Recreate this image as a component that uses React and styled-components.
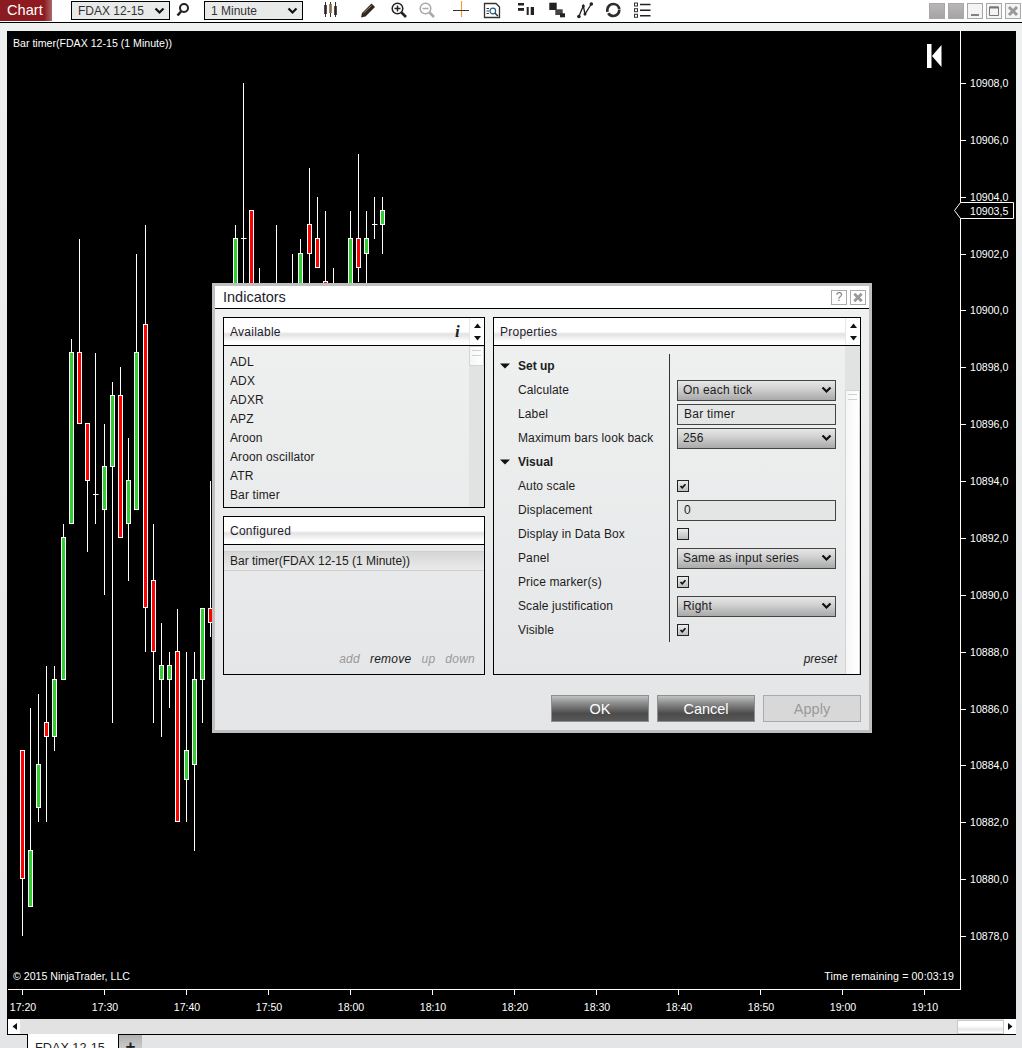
import React from "react";
import styled, { createGlobalStyle } from "styled-components";

const GlobalStyle = createGlobalStyle`
  html, body {
    margin: 0;
    padding: 0;
    background: #e9eaea;
  }
  * {
    box-sizing: border-box;
  }
`;

const Page = styled.div`
  position: relative;
  width: 1022px;
  height: 1048px;
  overflow: hidden;
  display: flex;
  flex-direction: column;
  font-family: "Liberation Sans", Arial, sans-serif;
  background: linear-gradient(#eff0f0, #e4e5e6);
`;

/* top toolbar */
const Toolbar = styled.div`
  display: flex;
  align-items: center;
  height: 23px;
  padding-bottom: 1px;
  background: #fff;
  border-bottom: 1px solid #000;
`;
const ChartTab = styled.div`
  align-self: stretch;
  width: 52px;
  padding-left: 7px;
  margin-right: 19px;
  color: #fff;
  font-size: 14.6px;
  line-height: 21px;
  background: linear-gradient(90deg, #8a1b20 0%, #8f1a20 85%, #a86a6c 100%);
`;
const ToolSelect = styled.div`
  display: flex;
  align-items: center;
  justify-content: space-between;
  width: 99px;
  height: 19px;
  padding: 0 4px 0 6px;
  font-size: 12px;
  color: #333;
  background: #e8e9e9;
  border: 1px solid #000;
`;
const SearchIcon = styled.svg`
  width: 14px;
  height: 19px;
  margin: 0 14px 0 6px;
`;
const ToolIcon = styled.svg`
  flex: none;
  width: 18px;
  height: 19px;
  margin-left: ${(p) => p.$gap}px;
`;
const WindowButtons = styled.div`
  display: flex;
  gap: 3px;
  margin-left: auto;
  margin-top: 1px;
  padding-right: 1px;
`;
const WinButton = styled.div`
  width: 16px;
  height: 16px;
  border: 1px solid #a8a8a8;
  background: ${(p) => (p.$filled ? "linear-gradient(#b8b6b6, #a6a4a4)" : "#f4f4f4")};
  svg {
    display: block;
    width: 14px;
    height: 14px;
  }
`;

/* chart */
const Workspace = styled.div`
  padding: 8px 6px 0 7px;
`;
const ChartFrame = styled.div`
  position: relative;
  display: flex;
  flex-direction: column;
  height: 1004px;
  background: #000;
  border-bottom: 1px solid #000;
`;
const ChartSvg = styled.svg`
  display: block;
  width: 1009px;
  height: 988px;
`;
const AxisLabel = styled.text`
  fill: #fff;
  font-family: "Liberation Sans", Arial, sans-serif;
  font-size: 10.6px;
`;
const ChartNote = styled.div`
  position: absolute;
  color: #fff;
  font-size: 10.6px;
  line-height: 12px;
  letter-spacing: ${(p) => p.$spacing || 0}px;
  ${(p) => p.$top !== undefined && `top: ${p.$top}px;`}
  ${(p) => p.$left !== undefined && `left: ${p.$left}px;`}
  ${(p) => p.$right !== undefined && `right: ${p.$right}px;`}
`;
const HScroll = styled.div`
  display: flex;
  align-items: center;
  height: 15px;
  background: #e2e2e2;
  border-left: 1px solid #000;
`;
const ScrollEnd = styled.div`
  display: flex;
  align-items: center;
  justify-content: center;
  width: ${(p) => p.$width}px;
  height: 15px;
  background: #fff;
`;
const HThumb = styled.div`
  width: 47px;
  height: 14px;
  margin-left: auto;
  background: linear-gradient(#fff 40%, #e6e6e6 70%, #fff);
  border: 1px solid #c8c8c8;
`;
const TabRow = styled.div`
  display: flex;
  padding-left: 27px;
`;
const SheetTab = styled.div`
  position: relative;
  width: 92px;
  height: 20px;
  margin-top: -1px;
  padding: 6px 0 0 7px;
  color: #222;
  font-size: 12.7px;
  line-height: 16px;
  background: #fff;
  border-left: 1px solid #000;
  border-right: 1px solid #000;
`;
const AddTab = styled.div`
  width: 23px;
  height: 20px;
  text-align: center;
  color: #222;
  font-size: 17px;
  font-weight: bold;
  line-height: 23px;
  background: linear-gradient(#b0b0b0, #d8d8d8);
`;

/* dialog */
const Dialog = styled.div`
  position: absolute;
  left: 212px;
  top: 283px;
  width: 660px;
  height: 450px;
  display: flex;
  flex-direction: column;
  border: 3px solid #c0c0c0;
  background: linear-gradient(#f0f1f1, #e4e5e6);
`;
const TitleBar = styled.div`
  display: flex;
  align-items: center;
  height: 23px;
  padding: 0 3px 0 8px;
  background: #fff;
  border-bottom: 1px solid #000;
`;
const Title = styled.div`
  flex: 1;
  color: #1c1c2c;
  font-size: 14.5px;
`;
const TitleButton = styled.div`
  width: 16px;
  height: 15px;
  margin-left: 3px;
  color: #777;
  font-size: 12px;
  line-height: 13px;
  text-align: center;
  border: 1px solid #aaa;
  svg {
    display: block;
    width: 14px;
    height: 13px;
  }
`;
const Body = styled.div`
  display: grid;
  grid-template-columns: 262px 368px;
  gap: 8px;
  padding: 8px 8px 0 8px;
`;
const Column = styled.div`
  display: flex;
  flex-direction: column;
  gap: 8px;
`;
const Panel = styled.div`
  position: relative;
  display: flex;
  flex-direction: column;
  height: ${(p) => p.$height}px;
  border: 1px solid #000;
`;
const PanelHeader = styled.div`
  display: flex;
  align-items: center;
  flex: none;
  height: 28px;
  padding-left: 6px;
  color: #1c1c2c;
  font-size: 12px;
  letter-spacing: 0.25px;
  background: linear-gradient(#fff 50%, #e2e2e2 60%, #fff 88%);
  border-bottom: 1px solid #000;
`;
const HeaderTitle = styled.div`
  flex: 1;
`;
const InfoMark = styled.div`
  margin-right: 9px;
  font-family: "Liberation Serif", serif;
  font-size: 17px;
  font-style: italic;
  font-weight: bold;
  color: #222;
`;
const HeaderArrows = styled.div`
  display: flex;
  flex-direction: column;
  align-items: center;
  justify-content: space-between;
  align-self: stretch;
  width: 15px;
  padding: 5px 0 4px;
  background: #fff;
  border-left: 1px solid #e8e8e8;
`;
const ListArea = styled.div`
  display: flex;
  flex: 1;
  min-height: 0;
`;
const ItemList = styled.div`
  flex: 1;
  padding-top: 7px;
`;
const Item = styled.div`
  height: 19px;
  padding-left: 6px;
  color: #1c1c1c;
  font-size: 12px;
  letter-spacing: 0.12px;
  line-height: 19px;
`;
const VScroll = styled.div`
  display: flex;
  flex: none;
  flex-direction: column;
  width: 15px;
  padding-top: ${(p) => p.$thumbTop}px;
  background: #e1e2e2;
`;
const VThumb = styled.div`
  height: ${(p) => p.$height}px;
  padding-top: 3px;
  background: linear-gradient(90deg, #f6f6f6, #fff);
  border: 1px solid #d4d4d4;
  border-bottom: ${(p) => (p.$open ? "none" : "1px solid #d4d4d4")};
  &::before {
    content: "";
    display: block;
    height: 4px;
    margin: 0 2px;
    border-top: 1px solid #d0d0d0;
    border-bottom: 1px solid #d0d0d0;
  }
`;
const ConfigBody = styled.div`
  flex: 1;
  display: flex;
  flex-direction: column;
  padding-top: 6px;
`;
const SelectedRow = styled.div`
  height: 20px;
  padding-left: 6px;
  color: #1c1c1c;
  font-size: 12px;
  line-height: 19px;
  background: linear-gradient(#d6d6d6, #eaeaea);
  border-top: 1px solid #cfcfcf;
  border-bottom: 1px solid #cfcfcf;
`;
const ActionRow = styled.div`
  display: flex;
  justify-content: flex-end;
  gap: 10px;
  margin-top: auto;
  padding: 0 9px 8px 0;
  font-size: 12px;
  font-style: italic;
  letter-spacing: 0.25px;
  line-height: 14px;
`;
const Action = styled.span`
  color: ${(p) => (p.$active ? "#1a1a1a" : "#9a9a9a")};
`;
const PropArea = styled.div`
  flex: 1;
  display: flex;
  flex-direction: column;
`;
const PropList = styled.div`
  margin-top: 6px;
`;
const PropRow = styled.div`
  display: flex;
  height: 24px;
  &:first-child {
    height: 26px;
    padding-top: 2px;
  }
  &:last-child {
    height: 25px;
    padding-bottom: 1px;
  }
`;
const PropName = styled.div`
  display: flex;
  align-items: center;
  width: 175px;
  padding-left: 24px;
  color: #1c1c1c;
  font-size: 12px;
  letter-spacing: 0.12px;
`;
const SectionName = styled(PropName)`
  position: relative;
  font-weight: bold;
  letter-spacing: 0;
  svg {
    position: absolute;
    left: 6px;
    top: 9px;
  }
`;
const PropValue = styled.div`
  display: flex;
  align-items: center;
  flex: 1;
  padding-left: 7px;
  border-left: 1px solid #333;
`;
const SelectBox = styled.div`
  display: flex;
  align-items: center;
  justify-content: space-between;
  width: 159px;
  height: 21px;
  padding: 0 3px 0 5px;
  color: #1c1c1c;
  font-size: 12px;
  letter-spacing: 0.2px;
  background: linear-gradient(#e6e6e6, #d2d2d2 40%, #a9a9a9);
  border: 1px solid #444;
`;
const TextBox = styled.div`
  display: flex;
  align-items: center;
  width: 159px;
  height: 21px;
  padding-left: 6px;
  color: #1c1c1c;
  font-size: 12px;
  letter-spacing: 0.25px;
  background: #e4e5e5;
  border: 1px solid #444;
`;
const CheckBox = styled.div`
  width: 12px;
  height: 12px;
  background: linear-gradient(#ececec, #bcbcbc);
  border: 1px solid #222;
  svg {
    display: block;
    width: 10px;
    height: 10px;
  }
`;
const PresetLink = styled.div`
  margin-top: auto;
  padding: 0 8px 8px 0;
  text-align: right;
  color: #1a1a1a;
  font-size: 12px;
  font-style: italic;
  line-height: 14px;
`;
const Footer = styled.div`
  display: flex;
  justify-content: flex-end;
  gap: 8px;
  padding: 20px 8px 0 0;
`;
const DialogButton = styled.div`
  width: 98px;
  height: 27px;
  text-align: center;
  font-size: 14.5px;
  line-height: 26px;
  color: ${(p) => (p.$disabled ? "#9a9a9a" : "#fff")};
  background: ${(p) =>
    p.$disabled
      ? "#d8d8d8"
      : "linear-gradient(#c2c2c2, #8a8a8a 30%, #4c4c4c 70%, #585858)"};
  border: 1px solid ${(p) => (p.$disabled ? "#aaa" : "#8f8f8f")};
`;

const TIMES = ["17:20", "17:30", "17:40", "17:50", "18:00", "18:10", "18:20", "18:30", "18:40", "18:50", "19:00", "19:10"];
const PRICES = [10908, 10906, 10904, 10902, 10900, 10898, 10896, 10894, 10892, 10890, 10888, 10886, 10884, 10882, 10880, 10878];
const GREEN = "#32cd32";
const RED = "#ff0000";

// x, wick top, wick bottom, body top, body bottom, colour (no colour = doji)
const CANDLES = [
  [22.5, 750, 936, 750, 879, RED],
  [30.5, 708, 907, 850, 907, GREEN],
  [38.5, 694, 822, 764, 808, GREEN],
  [46.5, 666, 822, 722, 737, RED],
  [54.5, 666, 751, 679, 737, GREEN],
  [63.5, 524, 680, 537, 680, GREEN],
  [71.5, 339, 524, 352, 524, GREEN],
  [79.5, 239, 424, 352, 424, RED],
  [87.5, 423, 552, 423, 481, RED],
  [95.5, 353, 524, 494, 494],
  [104.5, 424, 595, 466, 510, GREEN],
  [112.5, 382, 723, 395, 467, GREEN],
  [120.5, 367, 538, 395, 538, RED],
  [128.5, 438, 581, 480, 524, GREEN],
  [136.5, 254, 510, 352, 510, GREEN],
  [145.5, 225, 652, 324, 608, RED],
  [153.5, 524, 723, 580, 652, RED],
  [161.5, 623, 737, 665, 680, GREEN],
  [169.5, 652, 708, 665, 680, GREEN],
  [177.5, 609, 822, 651, 822, RED],
  [186.5, 652, 822, 750, 780, GREEN],
  [194.5, 652, 851, 679, 765, GREEN],
  [202.5, 608, 723, 608, 680, GREEN],
  [210.5, 481, 637, 608, 623, RED],
  [235.5, 225, 300, 238, 300, GREEN],
  [243.5, 83, 300, 238, 238],
  [251.5, 210, 300, 210, 300, RED],
  [259.5, 268, 300, 300, 300],
  [276.5, 225, 300, 300, 300],
  [292.5, 254, 300, 300, 300],
  [300.5, 239, 300, 253, 300, GREEN],
  [309.5, 168, 300, 224, 254, RED],
  [317.5, 197, 268, 238, 268, RED],
  [325.5, 211, 300, 281, 300, RED],
  [333.5, 268, 300, 300, 300],
  [350.5, 211, 300, 238, 300, GREEN],
  [358.5, 154, 282, 238, 268, RED],
  [366.5, 211, 300, 238, 254, GREEN],
  [374.5, 197, 239, 224, 224],
  [382.5, 197, 254, 210, 225, GREEN],
];

const Candle = ({ data }) => {
  const [x, wickTop, wickBottom, bodyTop, bodyBottom, color] = data;
  return (
    <g>
      <line x1={x} x2={x} y1={wickTop} y2={wickBottom} stroke="#fff" />
      {color ? (
        <rect x={x - 2} y={bodyTop + 0.5} width={4} height={bodyBottom - bodyTop - 1} fill={color} stroke="#fff" />
      ) : (
        bodyTop < 300 || x === 95.5 ? <line x1={x - 2.5} x2={x + 3} y1={bodyTop + 0.5} y2={bodyTop + 0.5} stroke="#fff" /> : null
      )}
    </g>
  );
};

const priceY = (price) => Math.round(83 + ((10908 - price) / 2) * 56.87);

const ChartPlot = () => (
  <ChartSvg viewBox="7 31 1009 988">
    {CANDLES.map((c) => (
      <Candle key={c[0]} data={c} />
    ))}
    <line x1={960.5} x2={960.5} y1={31} y2={990} stroke="#fff" />
    <line x1={8} x2={961} y1={989.5} y2={989.5} stroke="#fff" />
    {PRICES.map((p) => (
      <g key={p}>
        <line x1={960} x2={966} y1={priceY(p) + 0.5} y2={priceY(p) + 0.5} stroke="#fff" />
        <AxisLabel x={970} y={priceY(p) + 4}>{`${p},0`}</AxisLabel>
      </g>
    ))}
    {TIMES.map((t, i) => (
      <g key={t}>
        <line x1={22.5 + i * 82} x2={22.5 + i * 82} y1={989} y2={995} stroke="#fff" />
        <AxisLabel x={23 + i * 82} y={1011} textAnchor="middle">{t}</AxisLabel>
      </g>
    ))}
    <polygon points="954.5,210.5 960.5,202.5 1013.5,202.5 1013.5,218.5 960.5,218.5" fill="#000" stroke="#fff" />
    <AxisLabel x={970} y={215}>10903,5</AxisLabel>
    <rect x={927} y={44} width={4.5} height={24} fill="#fff" />
    <polygon points="941.5,45 932,56 941.5,67" fill="#fff" />
  </ChartSvg>
);

const Chevron = () => (
  <svg width="11" height="8" viewBox="0 0 11 8">
    <path d="M1.5 1.5 L5.5 5.5 L9.5 1.5" fill="none" stroke="#111" strokeWidth="2.2" />
  </svg>
);
const ArrowUp = () => (
  <svg width="9" height="5" viewBox="0 0 9 5">
    <path d="M1 5 L4.5 0.5 L8 5 Z" fill="#111" />
  </svg>
);
const ArrowDown = () => (
  <svg width="9" height="5" viewBox="0 0 9 5">
    <path d="M1 0 L8 0 L4.5 4.5 Z" fill="#111" />
  </svg>
);
const Expander = () => (
  <svg width="10" height="6" viewBox="0 0 10 6">
    <path d="M0 0.5 L10 0.5 L5 5.5 Z" fill="#111" />
  </svg>
);
const Tick = () => (
  <svg viewBox="0 0 10 10">
    <path d="M2.5 5 L4.2 6.8 L7.5 3.2" fill="none" stroke="#111" strokeWidth="1.7" />
  </svg>
);
const CloseCross = () => (
  <svg viewBox="0 0 14 14">
    <path d="M3 3 L11 11 M11 3 L3 11" stroke="#999" strokeWidth="3" />
  </svg>
);

const TOOL_ICONS = [
  {
    gap: 18.5,
    art: (
      <g stroke="#3a3028">
        <path d="M3.5 1 V16 M8.5 1 V16 M13.5 1 V16" />
        <path d="M3.5 4 V13" stroke="#2e2420" strokeWidth="2.6" />
        <path d="M8.5 3 V12" stroke="#8a6a48" strokeWidth="2.6" />
        <path d="M13.5 5 V14" stroke="#2e2420" strokeWidth="2.6" />
      </g>
    ),
  },
  {
    gap: 19.5,
    art: (
      <g>
        <path d="M2 16.5 L3 12 L12.5 2.5 L16 6 L6.5 15.5 Z" fill="#33261e" />
        <path d="M4.5 12 L12.5 4.5" stroke="#9c8a70" />
      </g>
    ),
  },
  {
    gap: 13,
    art: (
      <g fill="none" stroke="#222">
        <circle cx="7.5" cy="7.5" r="5.3" strokeWidth="1.5" />
        <path d="M11.5 11.5 L16 16" strokeWidth="2.6" />
        <path d="M7.5 4.5 V10.5 M4.5 7.5 H10.5" strokeWidth="1.5" />
      </g>
    ),
  },
  {
    gap: 10,
    art: (
      <g fill="none" stroke="#aaa">
        <circle cx="7.5" cy="7.5" r="5.3" strokeWidth="1.5" />
        <path d="M11.5 11.5 L16 16" strokeWidth="2.6" />
        <path d="M4.5 7.5 H10.5" strokeWidth="1.5" />
      </g>
    ),
  },
  {
    gap: 16,
    art: (
      <g>
        <path d="M9.5 0 V16" stroke="#f0a040" strokeWidth="1.2" />
        <path d="M1 9.5 H17" stroke="#333" />
      </g>
    ),
  },
  {
    gap: 13,
    art: (
      <g fill="none" stroke="#333">
        <path d="M1.5 2.5 H13 L16.5 6 V16.5 H1.5 Z" strokeWidth="1.3" />
        <circle cx="9.8" cy="10" r="2.8" stroke="#1f5f80" strokeWidth="1.2" />
        <path d="M12 12.2 L15 15" strokeWidth="1.5" />
        <path d="M3.5 7.5 H6 M3.5 10 H6 M3.5 12.5 H6" />
      </g>
    ),
  },
  {
    gap: 16,
    art: (
      <g fill="#222">
        <rect x="1" y="2" width="6" height="2.5" />
        <rect x="1" y="7" width="6" height="2.8" />
        <rect x="9.7" y="6" width="2" height="8" />
        <rect x="13.7" y="6" width="3.3" height="8" />
      </g>
    ),
  },
  {
    gap: 13,
    art: (
      <g fill="#222">
        <rect x="1.3" y="1.7" width="7.4" height="7.3" />
        <rect x="7.3" y="8.3" width="7.4" height="5.7" fill="#444" />
        <rect x="12" y="12.3" width="5" height="4" />
      </g>
    ),
  },
  {
    gap: 11,
    art: (
      <g fill="#222">
        <path d="M1.7 15.7 L6.3 5 L8 13 L14.3 3" fill="none" stroke="#222" strokeWidth="1.3" />
        <circle cx="1.9" cy="15.5" r="1.8" />
        <circle cx="6.3" cy="5" r="1.5" />
        <circle cx="8" cy="13" r="1.5" />
        <circle cx="14.3" cy="3" r="1.8" />
      </g>
    ),
  },
  {
    gap: 9,
    art: <circle cx="9.3" cy="9" r="6" fill="none" stroke="#2c2c2c" strokeWidth="2.7" strokeDasharray="15 1.5 19.7 1.5" />,
  },
  {
    gap: 10.5,
    art: (
      <g>
        <g fill="none" stroke="#333">
          <rect x="1.5" y="2" width="3" height="3" />
          <rect x="1.5" y="7.7" width="3" height="3" />
          <rect x="1.5" y="13.3" width="3" height="3" />
        </g>
        <g stroke="#222" strokeWidth="1.4">
          <path d="M7 3.5 H17.5 M7 9.2 H17.5 M7 14.8 H17.5" />
        </g>
      </g>
    ),
  },
];

const AVAILABLE = ["ADL", "ADX", "ADXR", "APZ", "Aroon", "Aroon oscillator", "ATR", "Bar timer"];

const PROPERTIES = [
  { section: "Set up" },
  { name: "Calculate", select: "On each tick" },
  { name: "Label", text: "Bar timer" },
  { name: "Maximum bars look back", select: "256" },
  { section: "Visual" },
  { name: "Auto scale", check: true },
  { name: "Displacement", text: "0" },
  { name: "Display in Data Box", check: false },
  { name: "Panel", select: "Same as input series" },
  { name: "Price marker(s)", check: true },
  { name: "Scale justification", select: "Right" },
  { name: "Visible", check: true },
];

const PropertyRow = ({ prop }) => (
  <PropRow>
    {prop.section ? (
      <SectionName>
        <Expander />
        {prop.section}
      </SectionName>
    ) : (
      <PropName>{prop.name}</PropName>
    )}
    <PropValue>
      {prop.select && (
        <SelectBox>
          {prop.select}
          <Chevron />
        </SelectBox>
      )}
      {prop.text && <TextBox>{prop.text}</TextBox>}
      {prop.check !== undefined && <CheckBox>{prop.check && <Tick />}</CheckBox>}
    </PropValue>
  </PropRow>
);

const IndicatorsDialog = () => (
  <Dialog>
    <TitleBar>
      <Title>Indicators</Title>
      <TitleButton>?</TitleButton>
      <TitleButton>
        <CloseCross />
      </TitleButton>
    </TitleBar>
    <Body>
      <Column>
        <Panel $height={191}>
          <PanelHeader>
            <HeaderTitle>Available</HeaderTitle>
            <InfoMark>i</InfoMark>
            <HeaderArrows>
              <ArrowUp />
              <ArrowDown />
            </HeaderArrows>
          </PanelHeader>
          <ListArea>
            <ItemList>
              {AVAILABLE.map((name) => (
                <Item key={name}>{name}</Item>
              ))}
            </ItemList>
            <VScroll $thumbTop={0}>
              <VThumb $height={20} />
            </VScroll>
          </ListArea>
        </Panel>
        <Panel $height={159}>
          <PanelHeader>
            <HeaderTitle>Configured</HeaderTitle>
          </PanelHeader>
          <ConfigBody>
            <SelectedRow>Bar timer(FDAX 12-15 (1 Minute))</SelectedRow>
            <ActionRow>
              <Action>add</Action>
              <Action $active>remove</Action>
              <Action>up</Action>
              <Action>down</Action>
            </ActionRow>
          </ConfigBody>
        </Panel>
      </Column>
      <Panel $height={358}>
        <PanelHeader>
          <HeaderTitle>Properties</HeaderTitle>
          <HeaderArrows>
            <ArrowUp />
            <ArrowDown />
          </HeaderArrows>
        </PanelHeader>
        <ListArea>
          <PropArea>
            <PropList>
              {PROPERTIES.map((prop) => (
                <PropertyRow key={prop.name || prop.section} prop={prop} />
              ))}
            </PropList>
            <PresetLink>preset</PresetLink>
          </PropArea>
          <VScroll $thumbTop={44}>
            <VThumb $height={284} $open />
          </VScroll>
        </ListArea>
      </Panel>
    </Body>
    <Footer>
      <DialogButton>OK</DialogButton>
      <DialogButton>Cancel</DialogButton>
      <DialogButton $disabled>Apply</DialogButton>
    </Footer>
  </Dialog>
);

export default function App() {
  return (
    <Page>
      <GlobalStyle />
      <Toolbar>
        <ChartTab>Chart</ChartTab>
        <ToolSelect>
          FDAX 12-15
          <Chevron />
        </ToolSelect>
        <SearchIcon viewBox="0 0 14 19">
          <circle cx="8" cy="7" r="4" fill="none" stroke="#222" strokeWidth="2" />
          <path d="M5 10.5 L1.5 14.5" stroke="#222" strokeWidth="2.6" />
        </SearchIcon>
        <ToolSelect>
          1 Minute
          <Chevron />
        </ToolSelect>
        {TOOL_ICONS.map((icon, i) => (
          <ToolIcon key={i} viewBox="0 0 18 19" $gap={icon.gap}>
            {icon.art}
          </ToolIcon>
        ))}
        <WindowButtons>
          <WinButton $filled />
          <WinButton $filled />
          <WinButton>
            <svg viewBox="0 0 14 14">
              <path d="M3 11 H11" stroke="#666" strokeWidth="1.6" />
            </svg>
          </WinButton>
          <WinButton>
            <svg viewBox="0 0 14 14">
              <path d="M2.5 3 H11.5 V11.5 H2.5 Z" fill="none" stroke="#777" />
              <path d="M2.5 3.5 H11.5" stroke="#777" strokeWidth="2" />
            </svg>
          </WinButton>
          <WinButton>
            <CloseCross />
          </WinButton>
        </WindowButtons>
      </Toolbar>
      <Workspace>
        <ChartFrame>
          <ChartPlot />
          <ChartNote $top={6} $left={6}>Bar timer(FDAX 12-15 (1 Minute))</ChartNote>
          <ChartNote $top={939} $left={6}>© 2015 NinjaTrader, LLC</ChartNote>
          <ChartNote $top={939} $right={62} $spacing={0.15}>Time remaining = 00:03:19</ChartNote>
          <HScroll>
            <ScrollEnd $width={12}>
              <svg width="5" height="7" viewBox="0 0 5 7">
                <path d="M5 0 L0.5 3.5 L5 7 Z" fill="#111" />
              </svg>
            </ScrollEnd>
            <HThumb />
            <ScrollEnd $width={12}>
              <svg width="5" height="7" viewBox="0 0 5 7">
                <path d="M0 0 L4.5 3.5 L0 7 Z" fill="#111" />
              </svg>
            </ScrollEnd>
          </HScroll>
        </ChartFrame>
      </Workspace>
      <TabRow>
        <SheetTab>FDAX 12-15</SheetTab>
        <AddTab>+</AddTab>
      </TabRow>
      <IndicatorsDialog />
    </Page>
  );
}
